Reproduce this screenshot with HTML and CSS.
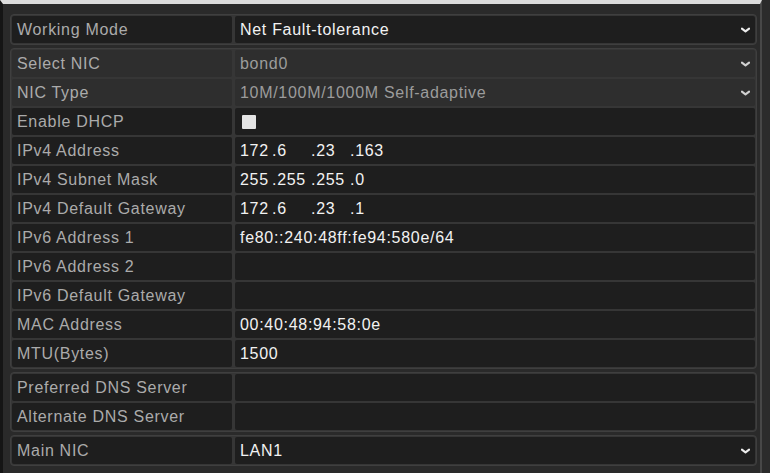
FILE: index.html
```html
<!DOCTYPE html>
<html lang="en">

<head>
    <meta charset="UTF-8">
    <meta name="viewport" content="width=device-width,initial-scale=1.0">
    <title>Network Settings</title>
    <link rel="stylesheet" href="styles.css">
</head>

<body>
    <div class="screen">
        <div class="group">
            <div class="row">
                <div class="label">Working Mode</div>
                <div class="value">Net Fault-tolerance
                    <svg class="arrow" viewBox="0 0 10 6"><path d="M1 1.5 L5 4.5 L9 1.5" /></svg>
                </div>
            </div>
        </div>

        <div class="group">
            <div class="row muted">
                <div class="label">Select NIC</div>
                <div class="value">bond0
                    <svg class="arrow" viewBox="0 0 10 6"><path d="M1 1.5 L5 4.5 L9 1.5" /></svg>
                </div>
            </div>
            <div class="row muted">
                <div class="label">NIC Type</div>
                <div class="value">10M/100M/1000M Self-adaptive
                    <svg class="arrow" viewBox="0 0 10 6"><path d="M1 1.5 L5 4.5 L9 1.5" /></svg>
                </div>
            </div>
            <div class="row">
                <div class="label">Enable DHCP</div>
                <div class="value"><span class="checkbox"></span></div>
            </div>
            <div class="row">
                <div class="label">IPv4 Address</div>
                <div class="value ip"><span>172</span><span>.6</span><span>.23</span><span>.163</span></div>
            </div>
            <div class="row">
                <div class="label">IPv4 Subnet Mask</div>
                <div class="value ip"><span>255</span><span>.255</span><span>.255</span><span>.0</span></div>
            </div>
            <div class="row">
                <div class="label">IPv4 Default Gateway</div>
                <div class="value ip"><span>172</span><span>.6</span><span>.23</span><span>.1</span></div>
            </div>
            <div class="row">
                <div class="label">IPv6 Address 1</div>
                <div class="value">fe80::240:48ff:fe94:580e/64</div>
            </div>
            <div class="row">
                <div class="label">IPv6 Address 2</div>
                <div class="value"></div>
            </div>
            <div class="row">
                <div class="label">IPv6 Default Gateway</div>
                <div class="value"></div>
            </div>
            <div class="row">
                <div class="label">MAC Address</div>
                <div class="value">00:40:48:94:58:0e</div>
            </div>
            <div class="row">
                <div class="label">MTU(Bytes)</div>
                <div class="value">1500</div>
            </div>
        </div>

        <div class="group">
            <div class="row">
                <div class="label">Preferred DNS Server</div>
                <div class="value"></div>
            </div>
            <div class="row">
                <div class="label">Alternate DNS Server</div>
                <div class="value"></div>
            </div>
        </div>

        <div class="group">
            <div class="row">
                <div class="label">Main NIC</div>
                <div class="value">LAN1
                    <svg class="arrow" viewBox="0 0 10 6"><path d="M1 1.5 L5 4.5 L9 1.5" /></svg>
                </div>
            </div>
        </div>
    </div>
</body>

</html>
```

FILE: styles.css
```css
html, body { margin: 0; background: #2b2b2b; }
body { font-family: "Liberation Sans", Arial, Helvetica, sans-serif; font-size: 16px; letter-spacing: 0.7px; }

.screen { box-sizing: border-box; width: 762px; height: 473px; padding: 10px 3px 0 7px; background: #2a2a2a; border-top: 4px solid #dcdcdc; border-left: 3px solid #151515; border-right: 2px solid #474747; }

/* bordered blocks of settings */
.group { display: flex; flex-direction: column; gap: 2px; padding: 1px; margin-bottom: 3px; background: #363636; border: 1px solid #3f3f3f; border-radius: 4px; }
.group:nth-child(n+3) { margin-top: 1px; }

.row { display: grid; grid-template-columns: 220px 1fr; column-gap: 3px; height: 27px; }
.label, .value { display: flex; align-items: center; padding-left: 5px; background: #1e1e1e; border-radius: 2px; white-space: nowrap; }
.label { color: #ababab; }
.value { position: relative; color: #f2f2f2; }

/* disabled rows */
.row.muted .label, .row.muted .value { background: #2e2e2e; }
.row.muted .value { color: #9c9c9c; }

.arrow { position: absolute; right: 5px; top: 11px; width: 9px; height: 6px; fill: none; stroke: #ececec; stroke-width: 2.4; stroke-linecap: round; stroke-linejoin: round; }
.row.muted .arrow { stroke: #d0d0d0; }

.checkbox { display: block; width: 14px; height: 14px; margin-left: 2px; background: #e4e4e4; border-radius: 1px; }

/* ip octet fields */
.ip span { display: inline-block; width: 39px; }
.ip span:first-child { width: 32px; }
```
